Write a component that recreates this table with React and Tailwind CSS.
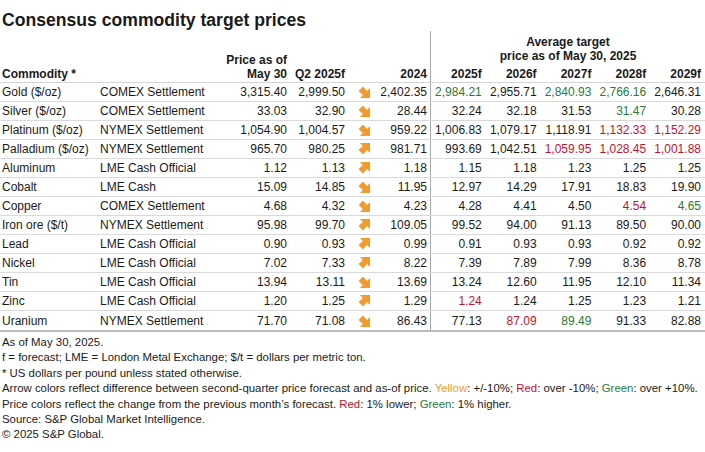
const GREEN = 'text-[#2a7a36]';
const RED = 'text-[#c4122e]';

const rows = [
  ['Gold ($/oz)', 'COMEX Settlement', '3,315.40', '2,999.50', 'down', '2,402.35', [['2,984.21', 'g'], ['2,955.71'], ['2,840.93', 'g'], ['2,766.16', 'g'], ['2,646.31']]],
  ['Silver ($/oz)', 'COMEX Settlement', '33.03', '32.90', 'down', '28.44', [['32.24'], ['32.18'], ['31.53'], ['31.47', 'g'], ['30.28']]],
  ['Platinum ($/oz)', 'NYMEX Settlement', '1,054.90', '1,004.57', 'down', '959.22', [['1,006.83'], ['1,079.17'], ['1,118.91'], ['1,132.33', 'r'], ['1,152.29', 'r']]],
  ['Palladium ($/oz)', 'NYMEX Settlement', '965.70', '980.25', 'up', '981.71', [['993.69'], ['1,042.51'], ['1,059.95', 'r'], ['1,028.45', 'r'], ['1,001.88', 'r']]],
  ['Aluminum', 'LME Cash Official', '1.12', '1.13', 'up', '1.18', [['1.15'], ['1.18'], ['1.23'], ['1.25'], ['1.25']]],
  ['Cobalt', 'LME Cash', '15.09', '14.85', 'down', '11.95', [['12.97'], ['14.29'], ['17.91'], ['18.83'], ['19.90']]],
  ['Copper', 'COMEX Settlement', '4.68', '4.32', 'down', '4.23', [['4.28'], ['4.41'], ['4.50'], ['4.54', 'r'], ['4.65', 'g']]],
  ['Iron ore ($/t)', 'NYMEX Settlement', '95.98', '99.70', 'up', '109.05', [['99.52'], ['94.00'], ['91.13'], ['89.50'], ['90.00']]],
  ['Lead', 'LME Cash Official', '0.90', '0.93', 'up', '0.99', [['0.91'], ['0.93'], ['0.93'], ['0.92'], ['0.92']]],
  ['Nickel', 'LME Cash Official', '7.02', '7.33', 'up', '8.22', [['7.39'], ['7.89'], ['7.99'], ['8.36'], ['8.78']]],
  ['Tin', 'LME Cash Official', '13.94', '13.11', 'down', '13.69', [['13.24'], ['12.60'], ['11.95'], ['12.10'], ['11.34']]],
  ['Zinc', 'LME Cash Official', '1.20', '1.25', 'up', '1.29', [['1.24', 'r'], ['1.24'], ['1.25'], ['1.23'], ['1.21']]],
  ['Uranium', 'NYMEX Settlement', '71.70', '71.08', 'down', '86.43', [['77.13'], ['87.09', 'r'], ['89.49', 'g'], ['91.33'], ['82.88']]],
];

// excel-style fat diagonal arrow icon
const Arrow = ({ dir }) => (
  <svg width="12" height="12" viewBox="0 0 12 12">
    {dir === 'up' ? (
      <polygon fill="#f39a2c" points="2,0 12,0 12,10 9.1,7.1 4.9,11.4 0.6,7.1 4.9,2.9" />
    ) : (
      <polygon fill="#f39a2c" points="2,12 12,12 12,2 9.1,4.9 4.9,0.6 0.6,4.9 4.9,9.1" />
    )}
  </svg>
);

const Row = ({ row, last }) => {
  const [name, source, price, q2, dir, y2024, years] = row;
  return (
    <div className={`flex text-[12px] ${last ? 'h-[21px] border-b-2 border-[#bcbcbc]' : 'h-[19px] border-b border-[#dadada]'}`}>
      <div className="w-[100px] pl-[2px] flex items-center whitespace-nowrap">{name}</div>
      <div className="w-[110px] flex items-center whitespace-nowrap">{source}</div>
      <div className="w-[80px] pr-[3px] flex items-center justify-end">{price}</div>
      <div className="w-[58px] pr-[3px] flex items-center justify-end">{q2}</div>
      <div className="w-[32px] flex items-center justify-center">
        <Arrow dir={dir} />
      </div>
      <div className="w-[50px] pr-[3px] flex items-center justify-end">{y2024}</div>
      {years.map(([v, c], i) => (
        <div
          key={i}
          className={`flex-1 pr-[4px] flex items-center justify-end ${i === 0 ? 'border-l border-[#a8a8a8]' : ''} ${c === 'g' ? GREEN : c === 'r' ? RED : ''}`}
        >
          {v}
        </div>
      ))}
    </div>
  );
};

export default function App() {
  return (
    <div className="w-[705px] h-[452px] bg-white text-[#1a1a1a] font-['Liberation_Sans',Arial,sans-serif] overflow-hidden">
      <h1 className="pt-[9px] pl-[2px] text-[17.6px] leading-[22px] font-bold">Consensus commodity target prices</h1>

      <div className="flex h-[52px] border-b border-[#d4d4d4] text-[12px] leading-[14px] font-bold">
        <div className="w-[100px] pl-[2px] pb-[1px] flex items-end whitespace-nowrap">Commodity *</div>
        <div className="w-[110px]" />
        <div className="w-[80px] pr-[3px] pb-[1px] flex items-end justify-end text-right whitespace-nowrap">
          Price as of
          <br />
          May 30
        </div>
        <div className="w-[58px] pr-[3px] pb-[1px] flex items-end justify-end whitespace-nowrap">Q2 2025f</div>
        <div className="w-[32px]" />
        <div className="w-[50px] pr-[3px] pb-[1px] flex items-end justify-end">2024</div>
        <div className="flex-1 border-l border-[#a8a8a8] flex flex-col">
          <div className="pt-[4px] text-center">
            Average target
            <br />
            price as of May 30, 2025
          </div>
          <div className="mt-auto pb-[1px] flex">
            {['2025f', '2026f', '2027f', '2028f', '2029f'].map((y) => (
              <div key={y} className="flex-1 pr-[4px] text-right">
                {y}
              </div>
            ))}
          </div>
        </div>
      </div>

      {rows.map((r, i) => (
        <Row key={r[0]} row={r} last={i === rows.length - 1} />
      ))}

      <div className="pt-[3px] pl-[2px] text-[11.4px] leading-[15.4px]">
        <p>As of May 30, 2025.</p>
        <p>f = forecast; LME = London Metal Exchange; $/t = dollars per metric ton.</p>
        <p>* US dollars per pound unless stated otherwise.</p>
        <p className="whitespace-nowrap">
          Arrow colors reflect difference between second-quarter price forecast and as-of price.{' '}
          <span className="text-[#f39a2c]">Yellow</span>: +/-10%; <span className={RED}>Red</span>: over -10%;{' '}
          <span className={GREEN}>Green</span>: over +10%.
        </p>
        <p>
          Price colors reflect the change from the previous month’s forecast. <span className={RED}>Red</span>: 1% lower;{' '}
          <span className={GREEN}>Green</span>: 1% higher.
        </p>
        <p>Source: S&amp;P Global Market Intelligence.</p>
        <p>© 2025 S&amp;P Global.</p>
      </div>
    </div>
  );
}
